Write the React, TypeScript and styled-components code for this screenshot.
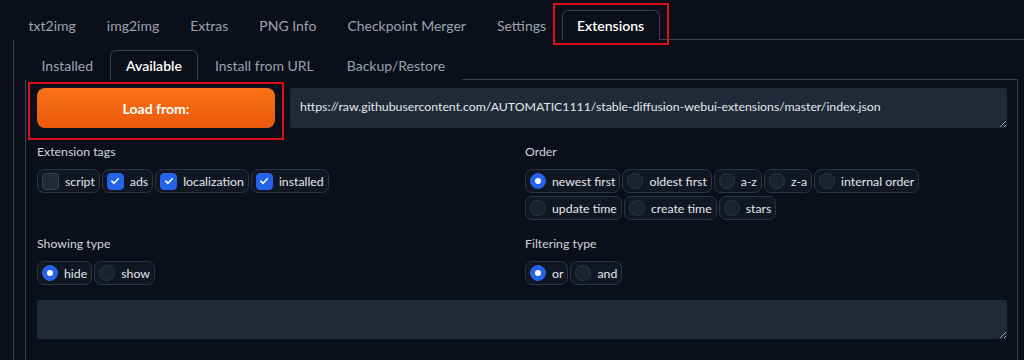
import React from "react";
import styled, { createGlobalStyle } from "styled-components";

const Global = createGlobalStyle`
  html, body { margin: 0; padding: 0; background: #0b0f19; overflow: hidden; }
  body { font-family: Lato, "Noto Sans", sans-serif; color: #e5e7eb; width: 1024px; height: 360px; }
  * { box-sizing: border-box; }
`;

const Page = styled.div`
  position: relative;
  padding: 10px 0 0 13px;
  width: 1030px;
  height: 360px;
`;

const TabBar = styled.div<{ $h: number }>`
  display: flex;
  height: ${(p) => p.$h}px;
  border-bottom: 1px solid #374151;
`;

const Tab = styled.div<{ $active?: boolean; $pad: number }>`
  display: flex;
  align-items: center;
  padding: 0 ${(p) => p.$pad}px;
  font-size: 14px;
  color: ${(p) => (p.$active ? "#ffffff" : "#9ca3af")};
  border: 1px solid ${(p) => (p.$active ? "#374151" : "transparent")};
  border-bottom: none;
  border-radius: 6px 6px 0 0;
  background: #0b0f19;
  margin-bottom: -1px;
  height: calc(100% + 1px);
  font-weight: ${(p) => (p.$active ? 600 : 400)};
  white-space: nowrap;
`;

const OuterPanel = styled.div`
  border-left: 1px solid #374151;
  border-right: 1px solid #374151;
  padding: 10px 11px 0 11px;
  height: 320px;
`;

const InnerPanel = styled.div`
  border-left: 1px solid #374151;
  border-right: 1px solid #374151;
  padding: 8px 10px 0 11px;
  height: 290px;
`;

const TopRow = styled.div`
  display: flex;
  gap: 15px;
  height: 40px;
`;

const LoadButton = styled.button`
  width: 238px;
  height: 40px;
  flex: none;
  border: none;
  border-radius: 8px;
  background: linear-gradient(180deg, #f97316 0%, #ea580c 100%);
  color: #ffffff;
  font-family: Lato, "Noto Sans", sans-serif;
  font-weight: 700;
  font-size: 14px;
`;

const Area = styled.textarea<{ $h: number }>`
  flex: 1;
  width: 100%;
  height: ${(p) => p.$h}px;
  display: block;
  background: #1f2937;
  border: none;
  border-radius: 2px;
  color: #e5e7eb;
  font-family: Lato, "Noto Sans", sans-serif;
  font-size: 12.3px;
  line-height: 20px;
  padding: 9px 10px;
  resize: vertical;
  outline: none;
  overflow: hidden;
  color-scheme: dark;
`;

const Grid = styled.div`
  display: grid;
  grid-template-columns: 488px 1fr;
  row-gap: 16px;
  margin-top: 16px;
`;

const Group = styled.div`
  display: flex;
  flex-direction: column;
  gap: 3px;
`;

const Label = styled.div`
  font-size: 12.3px;
  line-height: 16px;
  color: #d1d5db;
  margin-bottom: 6px;
`;

const Chips = styled.div`
  display: flex;
  flex-wrap: wrap;
  gap: 3px 2px;
`;

const Chip = styled.div`
  display: flex;
  align-items: center;
  gap: 6px;
  height: 24px;
  padding: 0 4px 0 4px;
  border: 1px solid #2b3544;
  border-radius: 7px;
  background: #111722;
  font-size: 12.3px;
  color: #e5e7eb;
  white-space: nowrap;
`;

const Box = styled.span<{ $on?: boolean }>`
  width: 17px;
  height: 17px;
  border-radius: 4px;
  display: inline-flex;
  align-items: center;
  justify-content: center;
  background: ${(p) => (p.$on ? "#2563eb" : "#1f2937")};
  border: 1px solid ${(p) => (p.$on ? "#2563eb" : "#374151")};
`;

const Dot = styled.span<{ $on?: boolean }>`
  width: 16px;
  height: 16px;
  border-radius: 50%;
  display: inline-flex;
  align-items: center;
  justify-content: center;
  background: ${(p) => (p.$on ? "#2563eb" : "#1a2230")};
  border: 1px solid ${(p) => (p.$on ? "#2563eb" : "#2b3544")};
  &::after {
    content: "";
    width: 6px;
    height: 6px;
    border-radius: 50%;
    background: ${(p) => (p.$on ? "#ffffff" : "transparent")};
  }
`;

const BottomArea = styled.div`
  margin-top: 15px;
`;

const Highlight = styled.div<{ $x: number; $y: number; $w: number; $h: number }>`
  position: absolute;
  left: ${(p) => p.$x}px;
  top: ${(p) => p.$y}px;
  width: ${(p) => p.$w}px;
  height: ${(p) => p.$h}px;
  border: 2px solid #d9111b;
  pointer-events: none;
`;

const Check = () => (
  <svg width="10" height="10" viewBox="0 0 10 10">
    <path d="M1.8 5.2 L4 7.3 L8.3 2.8" fill="none" stroke="#fff" strokeWidth="1.6" strokeLinecap="round" strokeLinejoin="round" />
  </svg>
);

const CheckChip = ({ label, on }: { label: string; on?: boolean }) => (
  <Chip>
    <Box $on={on}>{on && <Check />}</Box>
    {label}
  </Chip>
);

const RadioChip = ({ label, on }: { label: string; on?: boolean }) => (
  <Chip>
    <Dot $on={on} />
    {label}
  </Chip>
);

const outerTabs = ["txt2img", "img2img", "Extras", "PNG Info", "Checkpoint Merger", "Settings", "Extensions"];
const innerTabs = ["Installed", "Available", "Install from URL", "Backup/Restore"];

export default function App() {
  return (
    <Page>
      <Global />
      <TabBar $h={30}>
        {outerTabs.map((t) => (
          <Tab key={t} $pad={14.5} $active={t === "Extensions"}>{t}</Tab>
        ))}
      </TabBar>
      <OuterPanel>
        <TabBar $h={30}>
          {innerTabs.map((t) => (
            <Tab key={t} $pad={15.5} $active={t === "Available"}>{t}</Tab>
          ))}
        </TabBar>
        <InnerPanel>
          <TopRow>
            <LoadButton>Load from:</LoadButton>
            <Area
              $h={40}
              readOnly
              value="https://raw.githubusercontent.com/AUTOMATIC1111/stable-diffusion-webui-extensions/master/index.json"
            />
          </TopRow>
          <Grid>
            <Group>
              <Label>Extension tags</Label>
              <Chips>
                <CheckChip label="script" />
                <CheckChip label="ads" on />
                <CheckChip label="localization" on />
                <CheckChip label="installed" on />
              </Chips>
            </Group>
            <Group>
              <Label>Order</Label>
              <Chips>
                <RadioChip label="newest first" on />
                <RadioChip label="oldest first" />
                <RadioChip label="a-z" />
                <RadioChip label="z-a" />
                <RadioChip label="internal order" />
              </Chips>
              <Chips>
                <RadioChip label="update time" />
                <RadioChip label="create time" />
                <RadioChip label="stars" />
              </Chips>
            </Group>
            <Group>
              <Label>Showing type</Label>
              <Chips>
                <RadioChip label="hide" on />
                <RadioChip label="show" />
              </Chips>
            </Group>
            <Group>
              <Label>Filtering type</Label>
              <Chips>
                <RadioChip label="or" on />
                <RadioChip label="and" />
              </Chips>
            </Group>
          </Grid>
          <BottomArea>
            <Area $h={39} readOnly value="" />
          </BottomArea>
        </InnerPanel>
      </OuterPanel>
      <Highlight $x={553} $y={3} $w={116} $h={42} />
      <Highlight $x={28} $y={82} $w={256} $h={58} />
    </Page>
  );
}
